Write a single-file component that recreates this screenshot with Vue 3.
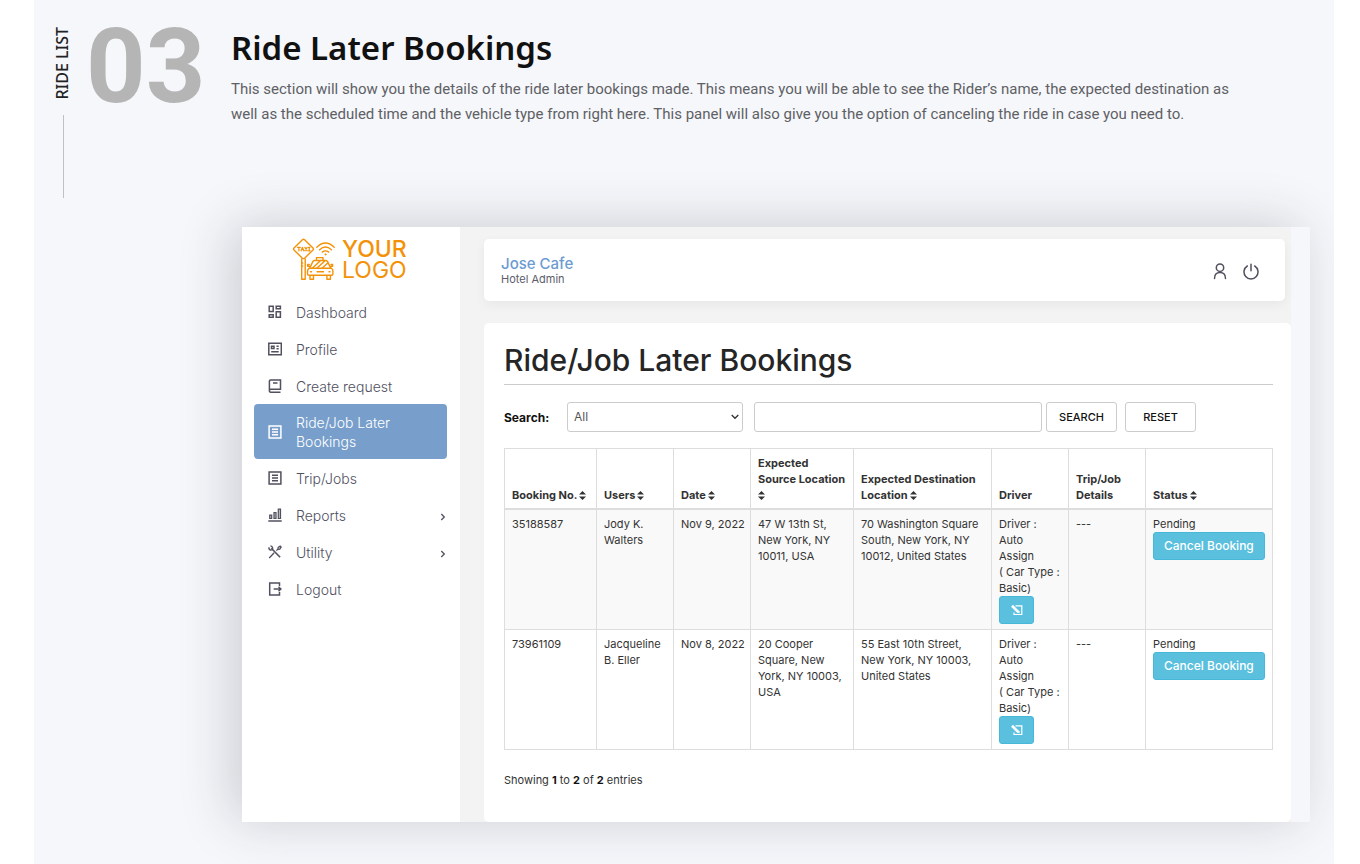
<script setup>
import { ref } from 'vue'

const menu = [
  { label: 'Dashboard', icon: 'dashboard' },
  { label: 'Profile', icon: 'profile' },
  { label: 'Create request', icon: 'book' },
  { label: 'Ride/Job Later Bookings', icon: 'list', active: true },
  { label: 'Trip/Jobs', icon: 'list' },
  { label: 'Reports', icon: 'chart', sub: true },
  { label: 'Utility', icon: 'tools', sub: true },
  { label: 'Logout', icon: 'logout' },
]

const columns = [
  { lines: ['Booking No.'], sort: true, cls: 'c-no' },
  { lines: ['Users'], sort: true, cls: 'c-mid' },
  { lines: ['Date'], sort: true, cls: 'c-mid' },
  { lines: ['Expected', 'Source Location', ''], sort: true, cls: 'c-src' },
  { lines: ['Expected Destination', 'Location'], sort: true, cls: 'c-dst' },
  { lines: ['Driver'], cls: 'c-mid' },
  { lines: ['Trip/Job', 'Details'], cls: 'c-mid' },
  { lines: ['Status'], sort: true, cls: 'c-status' },
]

const driver = ['Driver :', 'Auto', 'Assign', '( Car Type :', 'Basic)']
const bookings = [
  {
    no: '35188587',
    user: ['Jody K.', 'Walters'],
    date: 'Nov 9, 2022',
    from: ['47 W 13th St,', 'New York, NY', '10011, USA'],
    to: ['70 Washington Square', 'South, New York, NY', '10012, United States'],
  },
  {
    no: '73961109',
    user: ['Jacqueline', 'B. Eller'],
    date: 'Nov 8, 2022',
    from: ['20 Cooper', 'Square, New', 'York, NY 10003,', 'USA'],
    to: ['55 East 10th Street,', 'New York, NY 10003,', 'United States'],
  },
]

const field = ref('All')
const query = ref('')
</script>

<template>
  <section class="section">
    <header class="intro">
      <div class="rail">
        <span class="rail-text">RIDE LIST</span>
        <span class="rail-line"></span>
      </div>
      <div class="number">03</div>
      <div class="copy">
        <h2>Ride Later Bookings</h2>
        <p>
          This section will show you the details of the ride later bookings made. This means you will be able to see the Rider’s name, the expected destination as
          well as the scheduled time and the vehicle type from right here. This panel will also give you the option of canceling the ride in case you need to.
        </p>
      </div>
    </header>

    <div class="panel">
      <aside class="sidebar">
        <a class="logo" href="#">
          <svg width="44" height="44" viewBox="0 0 44 44" fill="none" stroke="#f39208" stroke-width="1.4" stroke-linejoin="round" stroke-linecap="round" aria-hidden="true">
            <path d="M10.4 1.7Q11.5.8 12.6 1.7L21 10Q21.9 11 21 12L12.6 20.2Q11.5 21.1 10.4 20.2L2 12Q1.100 11 2 10Z" />
            <path d="M5.500 9.300h2.800M6.900 9.300v3.500M9.100 12.800l1.300-3.500 1.300 3.500M12.900 9.300l2.300 3.500M15.200 9.300l-2.300 3.500M16.500 9.300h1.500M17.200 9.300v3.500M16.500 12.800h1.500" stroke-width="1.200" />
            <path d="M9.700 21v20.300h3.500V21M9.700 25h1M9.700 28h1" />
            <path d="M24.800 9.200Q33.500 1 42.200 9.200M27.600 11.700Q33.500 6.400 39.400 11.700M30.300 14.100Q33.500 11.700 36.700 14.100" />
            <circle cx="33.500" cy="16.400" r=".7" fill="#f39208" stroke-width=".6" />
            <path d="M24.500 22.500V19.600h6.500v2.900M17.700 30.300l3.100-6.700q.5-1.100 1.700-1.100h11.400q1.200 0 1.700 1.100l3.100 6.700M20.300 30.300l7.500-7M24.800 30.300l8-7.300M30 30.300l5.500-5M17.200 26.500h-1.500v1.800h2M39 26.500h1.600v1.800h-2" />
            <path d="M17 30.300h22.500q1.400 1 1.400 3v2.500q0 1.500-1.500 1.500H17q-1.500 0-1.500-1.500v-2.500q0-2 1.500-3ZM25 33.700h6.500M18.500 33.700h1M37 33.700h1M18 37.500v3.800h3.500v-3.800M34.900 37.500v3.800h3.500v-3.800" />
          </svg>
          <span class="logo-text"><b>YOUR</b><span>LOGO</span></span>
        </a>
        <nav>
          <a v-for="item in menu" :key="item.label" href="#" class="nav-item" :class="{ active: item.active }">
            <svg class="nav-icon" width="14" height="14" viewBox="0 0 14 14" fill="none" stroke="currentColor" stroke-width="1.500" aria-hidden="true">
              <template v-if="item.icon === 'dashboard'">
                <path d="M1.200 1.200h4v5.300h-4zM8.200 1.200h4.200v2.500H8.200zM8.200 6.800h4.200v5.500H8.200zM1.200 9.800h4v2.500h-4z" />
              </template>
              <template v-else-if="item.icon === 'profile'">
                <path d="M.8 1.200h12.500v11.500H.8zM3.500 4.200H6v2.300H3.500zM8.500 4.200h2.200M8.500 6.700h2.200M3.200 9.700h7.500" />
              </template>
              <template v-else-if="item.icon === 'book'">
                <path d="M12.500 13.200H2.700Q1.400 13.200 1.400 11.700V2Q1.400.9 2.500.9h10v9.300H2.800q-1.400 0-1.400 1.500M5 4h4.500" />
              </template>
              <template v-else-if="item.icon === 'list'">
                <path d="M1.100 1h11.800v12H1.100zM4 4.300h6M4 7h6M4 9.700h6" />
              </template>
              <template v-else-if="item.icon === 'chart'">
                <path d="M.3 13h13.400" />
                <path d="M1.700 7.200h2v3.300h-2zM6 4.500h2v6H6zM10.300 1.200h2.200v9.300h-2.200z" fill="currentColor" fill-opacity=".35" stroke-width="1.200" />
              </template>
              <template v-else-if="item.icon === 'tools'">
                <path d="M3.300 3.300l8.800 8.900" stroke-width="1.600" />
                <path d="M1.200 13l5-5.200M8.400 5.600l1.500-1.500.3-1.600 2-1.300.9.9-1.300 2-1.600.3M.9 2.300q-.2 2.500 2 2.800l1.500-.3.300-1.600Q4.400 1 2.400.9" stroke-width="1.300" />
              </template>
              <template v-else>
                <path d="M11.500 4V1H1.700v12h9.800v-3M5.700 7h7M10.500 4.700 12.900 7l-2.400 2.300" />
              </template>
            </svg>
            <span class="nav-label">{{ item.label }}</span>
            <svg v-if="item.sub" class="chevron" width="6" height="8" viewBox="0 0 6 8" fill="none" stroke="currentColor" stroke-width="1.300" aria-hidden="true"><path d="M1.300 1l3 3-3 3" /></svg>
          </a>
        </nav>
      </aside>

      <main class="main">
        <div class="topbar">
          <div>
            <div class="user">Jose Cafe</div>
            <div class="role">Hotel Admin</div>
          </div>
          <div class="actions">
            <button type="button" aria-label="Account">
              <svg width="16" height="18" viewBox="0 0 16 18" fill="none" stroke="currentColor" stroke-width="1.500" stroke-linecap="round"><circle cx="8" cy="5.700" r="3.700" /><path d="M2.500 16.500q0-5.900 5.500-5.900t5.500 5.900" /></svg>
            </button>
            <button type="button" aria-label="Log out">
              <svg width="16" height="18" viewBox="0 0 16 18" fill="none" stroke="currentColor" stroke-width="1.500" stroke-linecap="round"><path d="M8 2.200v6.500M4.300 4a7 7 0 1 0 7.400 0" /></svg>
            </button>
          </div>
        </div>

        <div class="content">
          <h1>Ride/Job Later Bookings</h1>
          <form class="search" @submit.prevent>
            <label for="search-field">Search:</label>
            <span class="select">
              <select id="search-field" v-model="field">
                <option>All</option>
              </select>
              <svg width="8" height="6" viewBox="0 0 8 6" fill="none" stroke="#333" stroke-width="1.300" aria-hidden="true"><path d="M.7 1 4 4.300 7.300 1" /></svg>
            </span>
            <input v-model="query" type="text" aria-label="Search text" />
            <button type="submit">SEARCH</button>
            <button type="reset" class="reset">RESET</button>
          </form>

          <table>
            <colgroup><col v-for="(c, i) in columns" :key="i" :class="c.cls" /></colgroup>
            <thead>
              <tr>
                <th v-for="(c, i) in columns" :key="i" scope="col">
                  <template v-for="(l, j) in c.lines" :key="j"><br v-if="j" />{{ l }}</template>
                  <svg v-if="c.sort" class="sort" :class="{ spaced: c.lines[c.lines.length - 1] }" width="7" height="9" viewBox="0 0 7 9" fill="currentColor" aria-hidden="true"><path d="M3.500 0 7 3.500H0zM0 5.500h7L3.500 9z" /></svg>
                </th>
              </tr>
            </thead>
            <tbody>
              <tr v-for="b in bookings" :key="b.no">
                <td>{{ b.no }}</td>
                <td><div v-for="l in b.user" :key="l">{{ l }}</div></td>
                <td>{{ b.date }}</td>
                <td><div v-for="l in b.from" :key="l">{{ l }}</div></td>
                <td><div v-for="l in b.to" :key="l">{{ l }}</div></td>
                <td>
                  <div v-for="l in driver" :key="l">{{ l }}</div>
                  <button type="button" class="info edit" aria-label="Assign driver">
                    <svg width="13" height="12" viewBox="0 0 13 12" fill="none" stroke="#fff" stroke-width="1.200"><path d="M5.500 1.800H11.800V10.500H4V8.500" /><path d="M2 1.800 8.300 8" stroke-width="2.600" /><path d="M7.500 8.800H9.300V7z" fill="#fff" stroke-width=".5" /></svg>
                  </button>
                </td>
                <td>---</td>
                <td>
                  <div>Pending</div>
                  <button type="button" class="info">Cancel Booking</button>
                </td>
              </tr>
            </tbody>
          </table>
          <p class="summary">Showing <b>1</b> to <b>2</b> of <b>2</b> entries</p>
        </div>
      </main>
    </div>
  </section>
</template>

<style>
body {
  background: #fff;
}
</style>

<style scoped>
* {
  box-sizing: border-box;
}

.section {
  min-height: 100vh;
  margin: 0 26px 0 34px;
  padding: 27px 24px 40px 0;
  background: #f5f7fb;
  overflow: hidden;
  font-family: Inter, "Noto Sans", sans-serif;
}

/* Section heading */
.intro {
  display: flex;
  align-items: flex-start;
  min-height: 200px;
  font-family: "Noto Sans", sans-serif;
}
.rail {
  width: 52px;
  padding-left: 16px;
  display: flex;
  flex-direction: column;
}
.rail-text {
  writing-mode: vertical-rl;
  transform: rotate(180deg);
  font-size: 16px;
  font-weight: 500;
  line-height: 24px;
  color: #222;
}
.rail-line {
  width: 1px;
  height: 83px;
  margin: 15px 0 0 13px;
  background: #bfc0c4;
}
.number {
  width: 145px;
  font-family: Roboto, sans-serif;
  font-size: 104px;
  font-weight: 700;
  line-height: 80px;
  color: #b5b5b5;
}
.copy {
  flex: 1;
  min-width: 0;
}
h2 {
  margin: 0 0 8px;
  font-size: 33px;
  font-weight: 600;
  line-height: 42px;
  color: #111;
}
.copy p {
  max-width: 1020px;
  margin: 0;
  font-family: Roboto, sans-serif;
  font-size: 15px;
  line-height: 25px;
  color: #5f6064;
}

/* Admin panel */
.panel {
  display: flex;
  margin-left: 208px;
  box-shadow: -10px -2px 50px rgba(40, 40, 45, 0.2);
}
.sidebar {
  flex: none;
  width: 218px;
  padding: 11px 13px 11px 12px;
  background: #fff;
}
.logo {
  display: flex;
  align-items: center;
  gap: 6px;
  height: 44px;
  margin: 0 0 11px 38px;
  color: #f39208;
  text-decoration: none;
}
.logo-text {
  font-size: 23px;
  line-height: 21px;
}
.logo-text b,
.logo-text span {
  display: block;
  font-weight: 500;
}
.logo-text span {
  font-weight: 400;
}
.nav-item {
  display: flex;
  align-items: center;
  min-height: 37px;
  padding: 9px 0 8px 14px;
  border-radius: 4px;
  color: #50505f;
  font-size: 14px;
  font-weight: 300;
  line-height: 19px;
  text-decoration: none;
}
.nav-item.active {
  background: #789fcb;
  color: #fff;
}
.nav-icon {
  flex: none;
  margin-right: 14px;
}
.nav-label {
  flex: 1;
  max-width: 116px;
}
.chevron {
  margin: 4px 1px 0 auto;
}

.main {
  flex: 1;
  min-width: 0;
  padding: 12px 19px 0 24px;
  background: linear-gradient(to left, #f5f7fb 19px, #f3f3f3 19px);
}
.topbar {
  display: flex;
  align-items: center;
  justify-content: space-between;
  height: 62px;
  margin: 0 6px 22px 0;
  padding: 2px 26px 0 17px;
  border-radius: 5px;
  background: #fff;
  box-shadow: 0 4px 12px rgba(0, 0, 0, 0.05);
}
.user {
  font-size: 15px;
  font-weight: 500;
  line-height: 16px;
  color: #6b9bd1;
}
.role {
  font-size: 11px;
  line-height: 14px;
  color: #5c5c6b;
}
.actions {
  display: flex;
  gap: 15px;
}
.actions button {
  padding: 0;
  border: 0;
  background: none;
  color: #50505f;
  line-height: 0;
}
.content {
  padding: 15px 18px 34px 20px;
  border-radius: 5px;
  background: #fff;
}
h1 {
  margin: 0 0 17px;
  padding-bottom: 2px;
  border-bottom: 1px solid #ccc;
  font-size: 30px;
  font-weight: 500;
  line-height: 44px;
  color: #252525;
}
.search {
  display: flex;
  align-items: center;
  height: 30px;
  margin-bottom: 16px;
}
.search label {
  width: 63px;
  font-size: 12px;
  font-weight: 700;
  color: #111;
}
.select {
  position: relative;
  flex: 0 1 176px;
  height: 30px;
}
.select svg {
  position: absolute;
  right: 4px;
  top: 12px;
  pointer-events: none;
}
select,
input {
  width: 100%;
  height: 30px;
  padding: 0 6px;
  border: 1px solid #ccc;
  border-radius: 3px;
  background: #fff;
  color: #555;
  font: 400 12px/20px Inter, sans-serif;
  appearance: none;
}
input {
  flex: 0 1 288px;
  margin: 0 4px 0 11px;
}
.search button {
  width: 71px;
  height: 30px;
  padding: 0;
  border: 1px solid #ccc;
  border-radius: 3px;
  background: #fff;
  color: #111;
  font: 500 11px/20px Inter, sans-serif;
}
.search .reset {
  margin-left: 8px;
}

table {
  width: 100%;
  table-layout: fixed;
  border-collapse: collapse;
  font-size: 11px;
  line-height: 16px;
  color: #333;
}
.c-no { width: 92px; }
.c-mid { width: 77px; }
.c-src { width: 103px; }
.c-dst { width: 138px; }
.c-status { width: 127px; }
th,
td {
  padding: 6px 7px 5px;
  border: 1px solid #ddd;
  text-align: left;
  vertical-align: top;
  white-space: nowrap;
}
th {
  border-bottom-width: 2px;
  vertical-align: bottom;
  font-weight: 700;
}
tbody tr:nth-child(odd) {
  background: #f9f9f9;
}
.sort {
  vertical-align: -1px;
}
.sort.spaced {
  margin-left: 2px;
}
.info {
  display: block;
  height: 28px;
  padding: 0 10px;
  border: 1px solid #46b8da;
  border-radius: 3px;
  background: #5bc0de;
  color: #fff;
  font: 500 12px/18px Inter, sans-serif;
}
.edit {
  line-height: 0;
}
.summary {
  margin: 22px 0 0;
  font-size: 11px;
  line-height: 16px;
  color: #333;
}
.summary b {
  color: #111;
}
</style>
